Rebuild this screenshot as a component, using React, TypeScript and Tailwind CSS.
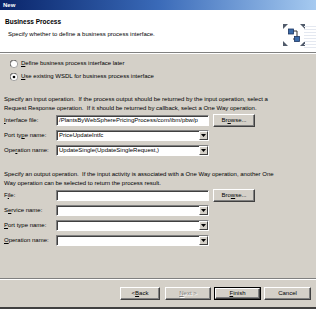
import React from "react";

const font = { fontFamily: '"Liberation Sans", Arial, sans-serif' };

function U({ children }: { children: React.ReactNode }) {
  return <span className="underline underline-offset-[1px] decoration-[0.5px]">{children}</span>;
}

function Radio({ checked }: { checked?: boolean }) {
  return (
    <svg width="8" height="8" viewBox="0 0 12 12" className="shrink-0">
      <circle cx="6" cy="6" r="5.5" fill="#ffffff" stroke="#808080" />
      <path d="M1.5 9.5 A5 5 0 0 1 9.5 1.5" fill="none" stroke="#404040" strokeWidth="1" />
      {checked && <circle cx="6" cy="6" r="2" fill="#000" />}
    </svg>
  );
}

function Input({ value, w = "w-[153px]" }: { value?: string; w?: string }) {
  return (
    <div
      className={`${w} h-[11px] bg-white border border-t-[#808080] border-l-[#808080] border-b-white border-r-white shadow-[inset_1px_1px_0_#404040] flex items-center pl-[2px] overflow-hidden whitespace-nowrap text-[6px] text-black`}
    >
      {value}
    </div>
  );
}

function Combo({ value }: { value?: string }) {
  return (
    <div className="w-[153px] h-[11px] bg-white border border-t-[#808080] border-l-[#808080] border-b-white border-r-white shadow-[inset_1px_1px_0_#404040] flex items-center overflow-hidden whitespace-nowrap text-[6px] text-black">
      <div className="flex-1 pl-[2px] overflow-hidden">{value}</div>
      <div className="w-[9px] h-[9px] bg-[#d4d0c8] border border-t-white border-l-white border-b-[#404040] border-r-[#404040] flex items-center justify-center">
        <svg width="5" height="3" viewBox="0 0 5 3">
          <path d="M0 0 H5 L2.5 3 Z" fill="#000" />
        </svg>
      </div>
    </div>
  );
}

function Button({
  children,
  w = "w-[42px]",
  disabled,
  def,
}: {
  children: React.ReactNode;
  w?: string;
  disabled?: boolean;
  def?: boolean;
}) {
  return (
    <div className={`${w} h-[13px] ${def ? "border border-black" : ""} flex`}>
      <div
        className={`flex-1 bg-[#d4d0c8] border border-t-white border-l-white border-b-[#404040] border-r-[#404040] shadow-[inset_-1px_-1px_0_#808080] flex items-center justify-center text-[6px] ${
          disabled ? "text-[#808080] [text-shadow:1px_1px_0_#fff]" : "text-black"
        }`}
      >
        {children}
      </div>
    </div>
  );
}

function Row({ label, children }: { label: React.ReactNode; children: React.ReactNode }) {
  return (
    <div className="h-[11px] flex items-center">
      <div className="w-[55px] text-[6px] text-black whitespace-nowrap pl-[3px]">{label}</div>
      {children}
    </div>
  );
}

function HeaderIcon() {
  return (
    <svg width="24" height="24" viewBox="0 0 24 24">
      <path d="M1 1 H6 L1 6 Z" fill="#505a6a" />
      <path d="M23 1 H18 L23 6 Z" fill="#505a6a" />
      <path d="M1 23 H6 L1 18 Z" fill="#505a6a" />
      <path d="M23 23 H18 L23 18 Z" fill="#505a6a" />
      <path d="M10 8 H15 V16 H11" fill="none" stroke="#333" strokeWidth="1" />
      <rect x="6.5" y="6" width="5" height="5" fill="#3a6aa8" stroke="#1c3560" strokeWidth="0.8" />
      <rect x="12.5" y="13.5" width="5" height="5" fill="#3a6aa8" stroke="#1c3560" strokeWidth="0.8" />
    </svg>
  );
}

export default function App() {
  return (
    <div
      className="w-[316px] h-[309px] bg-[#d4d0c8] flex flex-col overflow-hidden text-black relative"
      style={font}
    >
      {/* Title bar */}
      <div className="h-[10px] bg-gradient-to-r from-[#0a246a] via-[#3a6ab8] to-[#a6caf0] flex items-center pl-[3px]">
        <span className="text-white font-bold text-[6px] leading-none">New</span>
      </div>

      {/* Header */}
      <div className="h-[42px] bg-white flex relative">
        <div className="flex-1 pl-[5px] pt-[8px]">
          <div className="font-bold text-[6.5px] leading-[8px]">Business Process</div>
          <div className="text-[6px] leading-[8px] mt-[4px] pl-[3px]">
            Specify whether to define a business process interface.
          </div>
        </div>
        <div className="absolute left-[282px] top-[13px]">
          <HeaderIcon />
        </div>
        <div className="absolute right-0 top-[16px] w-[12px] flex flex-col gap-[2px]">
          {[0, 1, 2, 3, 4, 5, 6, 7].map((i) => (
            <div key={i} className="h-px bg-[#e4e8f0]" />
          ))}
        </div>
      </div>
      <div className="h-px bg-[#808080]" />
      <div className="h-px bg-white" />

      {/* Content */}
      <div className="flex-1 flex flex-col pl-[1px] pr-[4px]">
        <div className="mt-[3px] h-[13px] flex items-center gap-[3px] pl-[9px] text-[6px]">
          <Radio />
          <span>
            <U>D</U>efine business process interface later
          </span>
        </div>
        <div className="h-[13px] flex items-center gap-[3px] pl-[9px] text-[6px]">
          <Radio checked />
          <span>
            <U>U</U>se existing WSDL for business process interface
          </span>
        </div>

        <div className="mt-[12px] text-[6px] leading-[9px] pl-[3px] whitespace-nowrap">
          <div>Specify an input operation.&nbsp; If the process output should be returned by the input operation, select a</div>
          <div>Request Response operation.&nbsp; If it should be returned by callback, select a One Way operation.</div>
        </div>

        <div className="mt-[2px] flex flex-col gap-[4px]">
          <Row label={<><U>I</U>nterface file:</>}>
            <Input value="/PlantsByWebSpherePricingProcess/com/ibm/pbw/p" />
            <div className="ml-[4px]">
              <Button>
                Br<U>o</U>wse...
              </Button>
            </div>
          </Row>
          <Row label={<>Port ty<U>p</U>e name:</>}>
            <Combo value="PriceUpdateIntfc" />
          </Row>
          <Row label={<>Ope<U>r</U>ation name:</>}>
            <Combo value="UpdateSingle(UpdateSingleRequest,)" />
          </Row>
        </div>

        <div className="mt-[14px] text-[6px] leading-[9px] pl-[3px] whitespace-nowrap">
          <div>Specify an output operation.&nbsp; If the input activity is associated with a One Way operation, another One</div>
          <div>Way operation can be selected to return the process result.</div>
        </div>

        <div className="mt-[2px] flex flex-col gap-[4px]">
          <Row label={<>F<U>i</U>le:</>}>
            <Input />
            <div className="ml-[4px]">
              <Button>
                Bro<U>w</U>se...
              </Button>
            </div>
          </Row>
          <Row label={<>S<U>e</U>rvice name:</>}>
            <Combo />
          </Row>
          <Row label={<><U>P</U>ort type name:</>}>
            <Combo />
          </Row>
          <Row label={<><U>O</U>peration name:</>}>
            <Combo />
          </Row>
        </div>
      </div>

      {/* Bottom separator */}
      <div className="h-px bg-[#808080]" />
      <div className="h-px bg-white" />

      <div className="h-[27px] flex items-start pt-[7px] pl-[120px]">
        <Button w="w-[40px]">
          &lt; <U>B</U>ack
        </Button>
        <div className="ml-[5px]">
          <Button w="w-[46px]" disabled>
            <U>N</U>ext &gt;
          </Button>
        </div>
        <div className="ml-[3px]">
          <Button w="w-[47px]" def>
            <U>F</U>inish
          </Button>
        </div>
        <div className="ml-[3px]">
          <Button w="w-[47px]">Cancel</Button>
        </div>
      </div>
      <div className="h-[2px] bg-[#404040]" />
    </div>
  );
}
